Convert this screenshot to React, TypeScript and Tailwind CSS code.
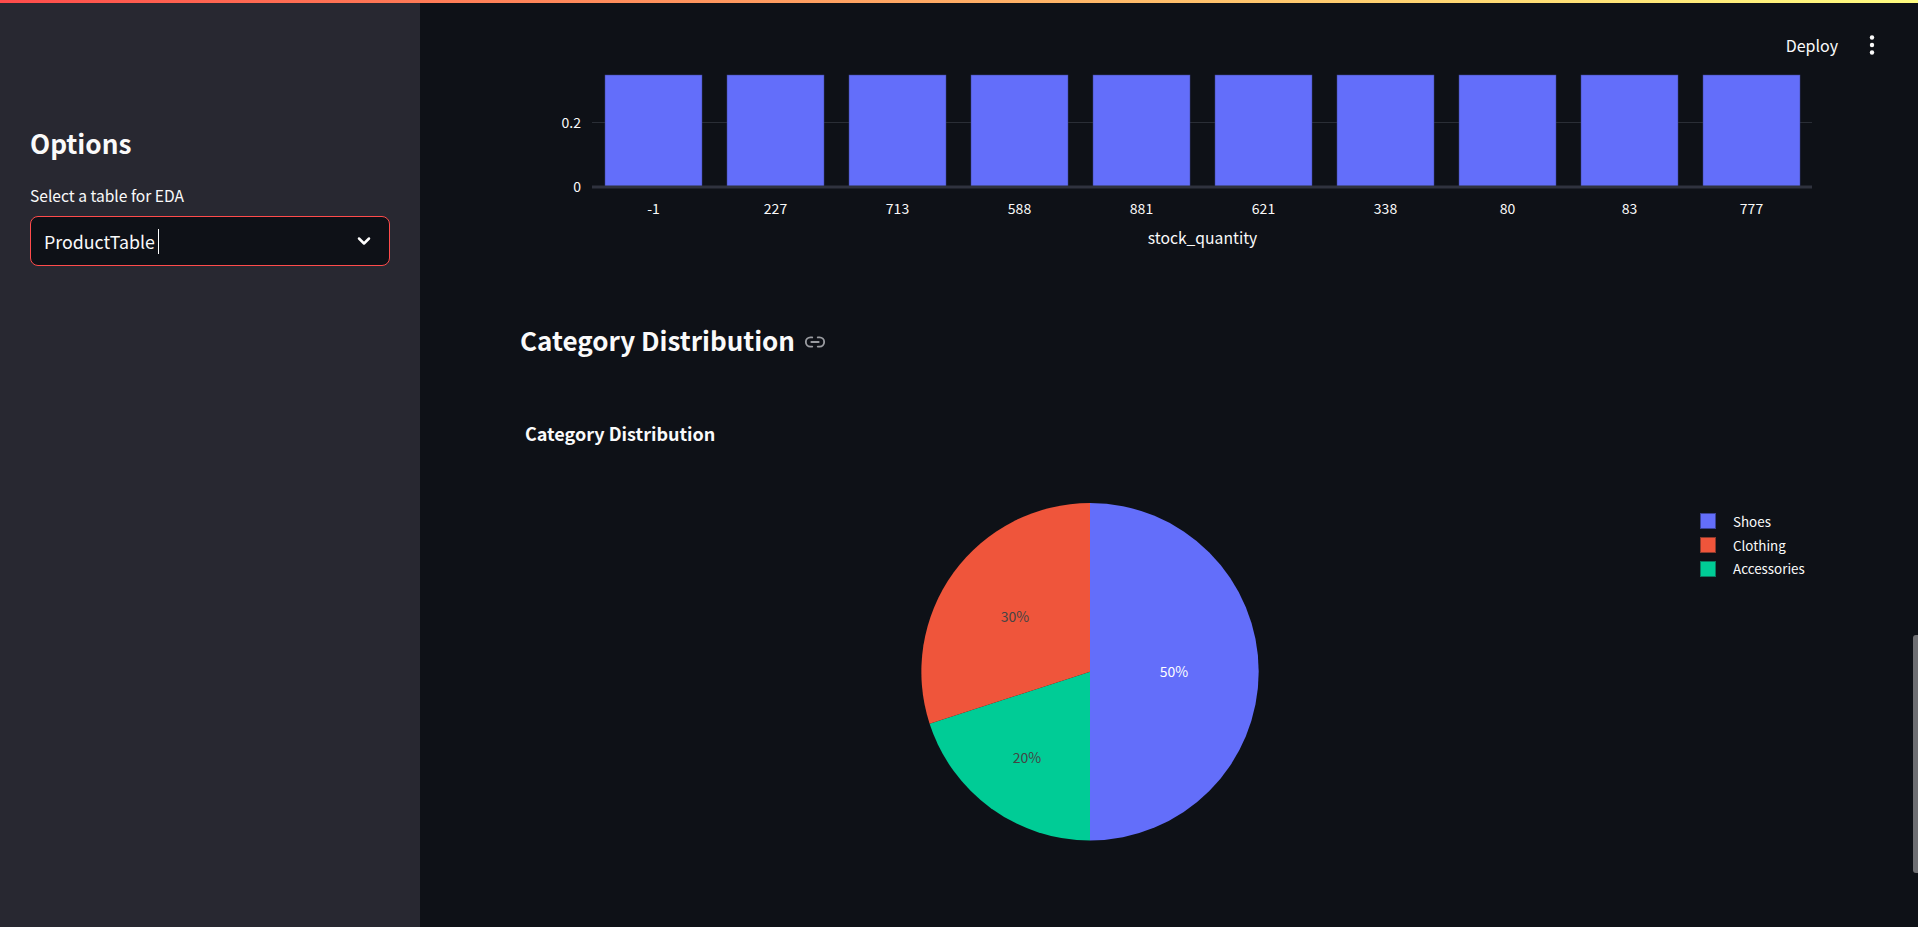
import { Link2, ChevronDown } from "lucide-react";

const font = { fontFamily: '"Noto Sans CJK SC", "Noto Sans", sans-serif' };
const barX = [605, 727, 849, 971, 1093, 1215, 1337, 1459, 1581, 1703];
const labels = ["-1", "227", "713", "588", "881", "621", "338", "80", "83", "777"];

function BarChart() {
  return (
    <svg viewBox="521 3 1300 252" width={1300} height={252} className="ml-px block" style={font}>
      <line x1={592} x2={1812} y1={122.5} y2={122.5} stroke="#2a2e36" strokeWidth={1} />
      {barX.map((x) => (
        <rect key={x} x={x} y={75} width={97} height={111.5} fill="#636efa" stroke="#3f4590" strokeWidth={0.5} />
      ))}
      <rect x={592} y={185.5} width={1220} height={3} fill="#2f323e" />
      <text x={581} y={128} textAnchor="end" fontSize={14} fill="#fafafa">0.2</text>
      <text x={581} y={192} textAnchor="end" fontSize={14} fill="#fafafa">0</text>
      {barX.map((x, i) => (
        <text key={x} x={x + 48.5} y={213.5} textAnchor="middle" fontSize={14} fill="#fafafa">{labels[i]}</text>
      ))}
      <text x={1202.5} y={244} textAnchor="middle" fontSize={15.7} fill="#fafafa">stock_quantity</text>
    </svg>
  );
}

function PieChart() {
  return (
    <svg viewBox="521 400 1300 526" width={1300} height={526} className="mt-[39px] ml-px block" style={font}>
      <text x={525} y={441} fontSize={18} fontWeight={700} fill="#fafafa">Category Distribution</text>
      <path d="M1090 671.7 L1090 503 A168.7 168.7 0 0 1 1090 840.4 Z" fill="#636efa" />
      <path d="M1090 671.7 L1090 840.4 A168.7 168.7 0 0 1 929.6 723.8 Z" fill="#00cc96" />
      <path d="M1090 671.7 L929.6 723.8 A168.7 168.7 0 0 1 1090 503 Z" fill="#ef553b" />
      <text x={1174} y={677} textAnchor="middle" fontSize={14} fill="#ffffff">50%</text>
      <text x={1015} y={622} textAnchor="middle" fontSize={14} fill="#444444">30%</text>
      <text x={1027} y={763} textAnchor="middle" fontSize={14} fill="#444444">20%</text>
      <rect x={1700.5} y={513.5} width={15} height={15} fill="#636efa" stroke="#3a4296" />
      <rect x={1700.5} y={537.5} width={15} height={15} fill="#ef553b" stroke="#8a3a2c" />
      <rect x={1700.5} y={561.5} width={15} height={15} fill="#00cc96" stroke="#0a7a60" />
      <text x={1733} y={527} fontSize={13.4} fill="#fafafa">Shoes</text>
      <text x={1733} y={551} fontSize={13.4} fill="#fafafa">Clothing</text>
      <text x={1733} y={574} fontSize={13.4} fill="#fafafa">Accessories</text>
    </svg>
  );
}

export default function App() {
  return (
    <div className="relative flex h-[927px] flex-col overflow-hidden bg-[#0e1117] text-[#fafafa]" style={font}>
      <div className="h-[3px] shrink-0 bg-gradient-to-r from-[#ff4b4b] to-[#fffd80]" />
      <div className="flex min-h-0 flex-1">
        <aside className="flex w-[420px] shrink-0 flex-col bg-[#282831] px-[30px] pt-[120px]">
          <h2 className="text-[26.2px] leading-[40px] font-semibold">Options</h2>
          <label className="mt-[20px] text-[15.6px] leading-[24px]">Select a table for EDA</label>
          <div className="mt-[9px] flex h-[50px] items-center justify-between rounded-lg border border-[#ff4b4b] bg-[#0e1117] pr-[15px] pl-[13px]">
            <span className="flex items-center text-[17.8px] leading-[24px]">
              ProductTable
              <span className="ml-[3px] h-[25px] w-px bg-white" />
            </span>
            <ChevronDown size={20} strokeWidth={3} className="text-white" />
          </div>
        </aside>
        <main className="min-w-0 flex-1 pl-[100px]">
          <BarChart />
          <div className="mt-[65px] flex h-[40px] items-center gap-[9px]">
            <h2 className="text-[26px] leading-[40px] font-semibold">Category Distribution</h2>
            <Link2 size={22} className="mt-[4px] text-[#9a9ca1]" />
          </div>
          <div className="h-px" />
          <PieChart />
        </main>
      </div>
      <div className="absolute top-[30px] right-[80px] text-[16px] leading-[30px]">Deploy</div>
      <svg className="absolute top-[33px] right-[40px]" width={12} height={24} viewBox="0 0 12 24" fill="#fafafa">
        <circle cx={6} cy={4.5} r={2.2} />
        <circle cx={6} cy={12} r={2.2} />
        <circle cx={6} cy={19.5} r={2.2} />
      </svg>
      <div className="absolute top-[635px] right-0 h-[238px] w-[5px] rounded-l-[3px] bg-[#6e6f73]" />
    </div>
  );
}
